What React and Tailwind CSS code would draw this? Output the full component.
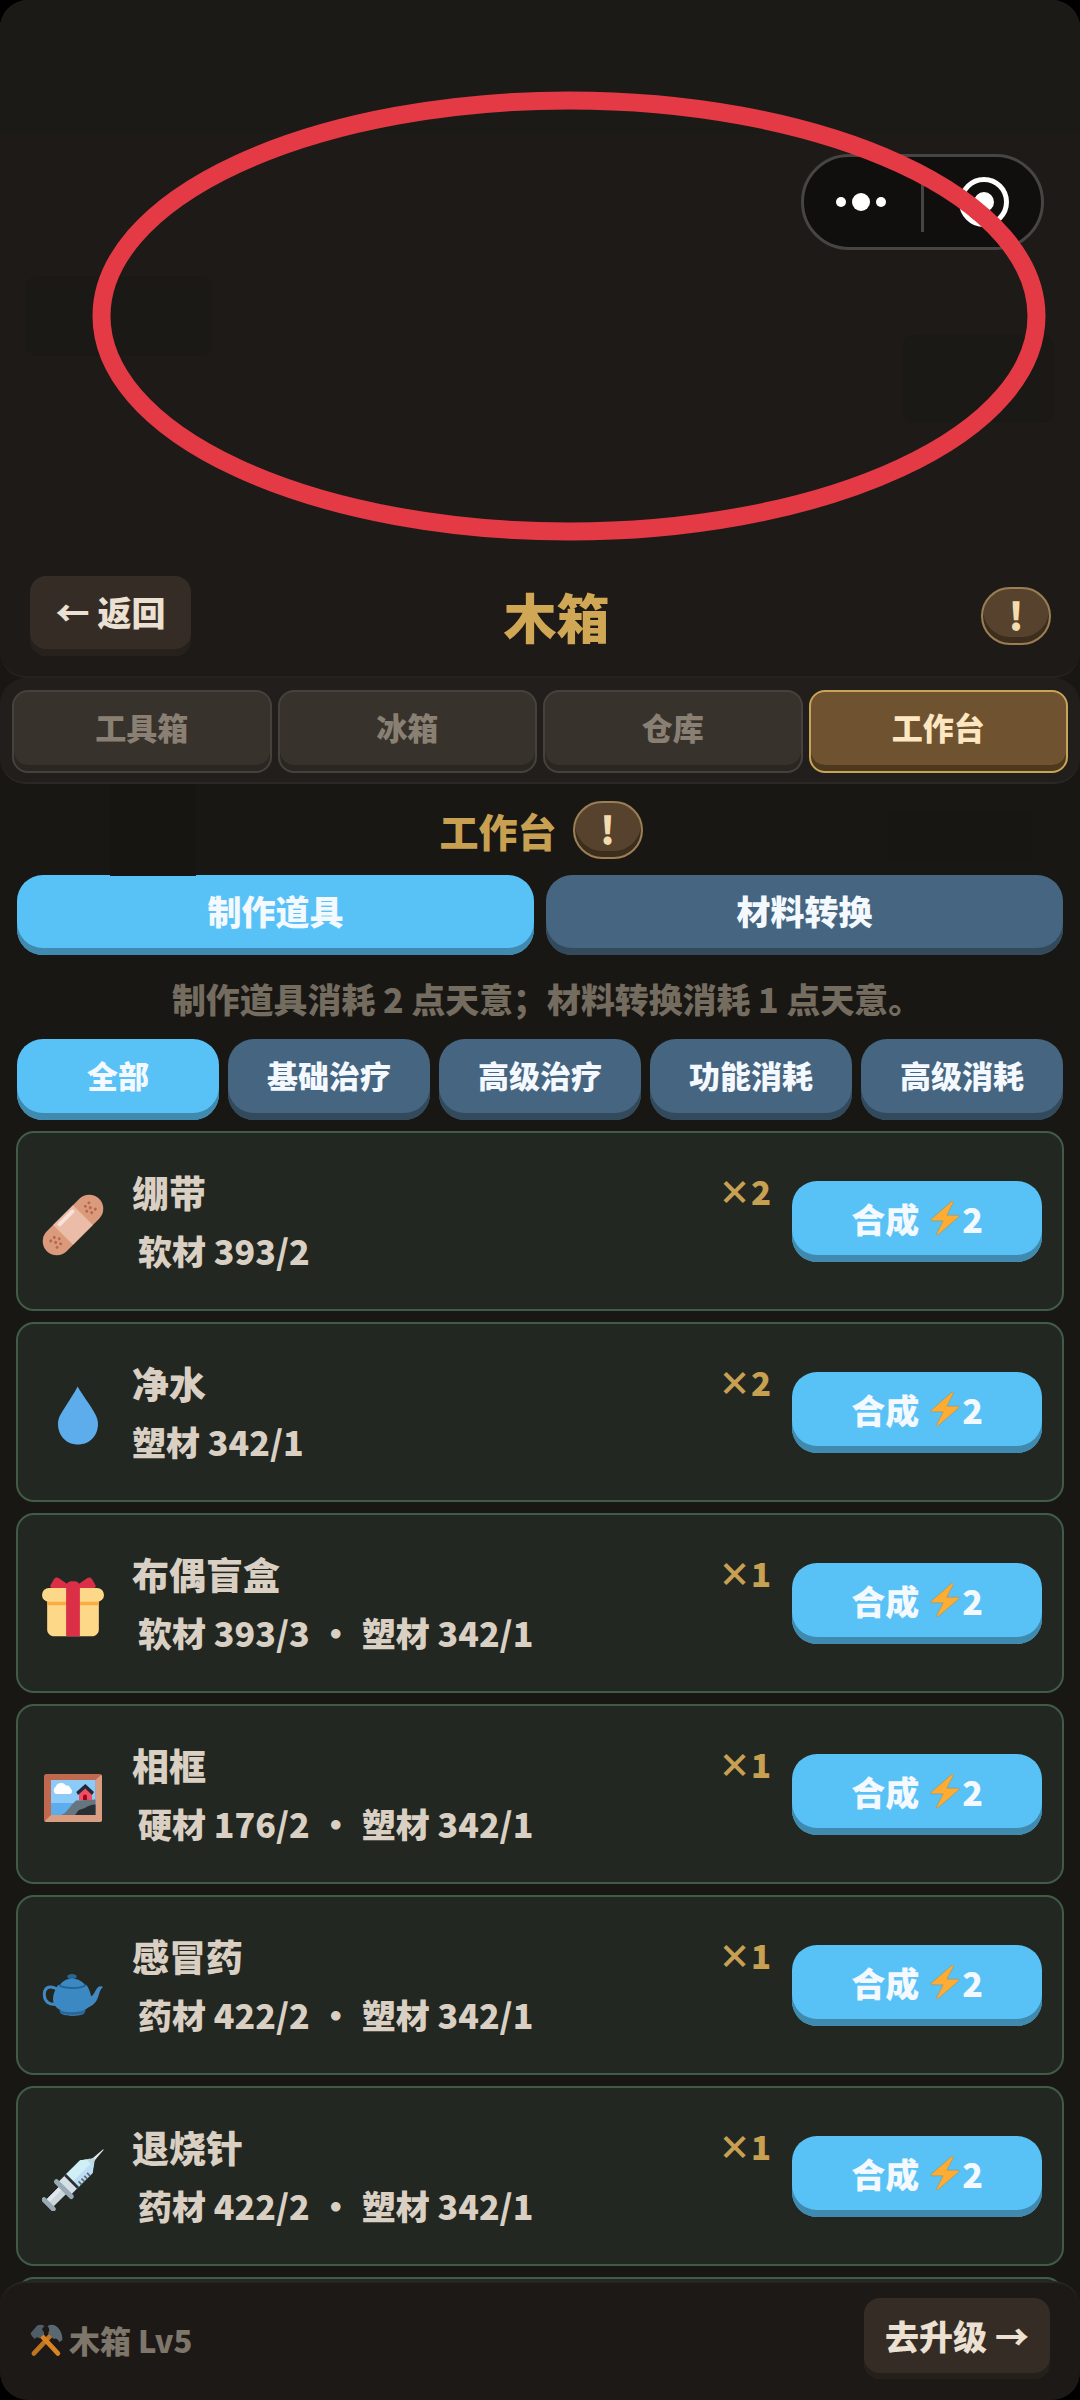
import React from "react";

const storageTabs = ["工具箱", "冰箱", "仓库", "工作台"];
const categories = ["全部", "基础治疗", "高级治疗", "功能消耗", "高级消耗"];

const recipes = [
  { name: "绷带", icon: BandageIcon, cost: "软材 393/2", count: 2, indent: true },
  { name: "净水", icon: DropIcon, cost: "塑材 342/1", count: 2, indent: false },
  { name: "布偶盲盒", icon: GiftIcon, cost: "软材 393/3 • 塑材 342/1", count: 1, indent: true },
  { name: "相框", icon: FrameIcon, cost: "硬材 176/2 • 塑材 342/1", count: 1, indent: true },
  { name: "感冒药", icon: TeapotIcon, cost: "药材 422/2 • 塑材 342/1", count: 1, indent: true },
  { name: "退烧针", icon: SyringeIcon, cost: "药材 422/2 • 塑材 342/1", count: 1, indent: true },
];

function BandageIcon() {
  const dots = [[0, -4.5], [5, -4.5], [2.5, 0], [-2.5, 0], [0, 4.5], [5, 4.5]];
  return (
    <svg viewBox="0 0 62 62" className="size-[62px]">
      <g transform="translate(31 31) rotate(-45)">
        <rect x="-37" y="-14" width="74" height="28" rx="14" fill="#DC9A7C" />
        <rect x="-14" y="-14" width="28" height="28" fill="#EBBCA8" />
        <rect x="-11" y="-12" width="22" height="4" rx="2" fill="#F8E3DA" />
        {dots.map(([x, y], i) => (
          <g key={i} fill="#B56A4E">
            <circle cx={x + 22} cy={y} r="1.5" />
            <circle cx={-x - 22} cy={y} r="1.5" />
          </g>
        ))}
      </g>
    </svg>
  );
}

function DropIcon() {
  return (
    <svg viewBox="0 0 62 62" className="size-[62px]">
      <path
        fill="#5DADEC"
        d="M35.6 1.500 C33 7 23 22 18.600 29.500 C16.500 33 16 36 16 39 C16 51 24.500 59.500 36 59.500 C47.500 59.500 56 51 56 39 C56 36 55.200 33 53.400 29.500 C49 21 38.500 7 35.600 1.500Z"
      />
    </svg>
  );
}

function GiftIcon() {
  return (
    <svg viewBox="0 0 36 36" className="size-[62px]">
      <path fill="#FDD888" d="M33 31c0 2.200-1.800 4-4 4H7c-2.200 0-4-1.800-4-4V14h30v17z" />
      <rect x="0" y="7" width="36" height="8" rx="4" fill="#FDD888" />
      <path fill="#FCAB40" d="M3 15h30v2H3z" />
      <path fill="#DA2F47" d="M19 3h-2c-1.657 0-3 1.343-3 3v29h8V6c0-1.657-1.343-3-3-3z" />
      <path
        fill="#DA2F47"
        d="M16 7c1.100 0 1.263-.516.361-1.147L9.639 1.147c-.902-.631-2.085-.366-2.631.589L4.992 5.264C4.446 6.219 4.900 7 6 7h10zm4 0c-1.100 0-1.263-.516-.361-1.147l6.723-4.706c.901-.631 2.085-.366 2.631.589l2.016 3.527C31.554 6.219 31.100 7 30 7H20z"
      />
    </svg>
  );
}

function FrameIcon() {
  return (
    <svg viewBox="0 0 62 62" className="size-[62px]">
      <rect x="2" y="7" width="58" height="48" rx="2.500" fill="#C1694F" />
      <path fill="#D99E82" d="M60 9 V52.500 Q60 55 57.500 55 H4 L2.600 54.300 L9 48 H53.500 V13 L59.300 7.700Z" />
      <rect x="9" y="13" width="44.500" height="35" fill="#8CCAF7" />
      <path fill="#5DADEC" d="M9 36 H40 V48 H9Z" />
      <path fill="#66757F" d="M19 48 C24 47 27 40 34 33.500 L53.500 32.500 V48Z" />
      <path fill="#292F33" d="M33 48 C36 45 35 43 40 42 C45 41 45 38 53.500 37.500 V48Z" />
      <path fill="#FFF" d="M14 27 a4 4 0 0 1 -.5 -7 a6 6 0 0 1 10.500 -1.500 a4 4 0 0 1 4.500 3 a3 3 0 0 1 -.5 5.500Z" />
      <path fill="#EE4F63" d="M37 26 L43.300 20 L50 26 V33 H37Z" />
      <path fill="#A0041E" d="M41 33 V29.500 a2 2 0 0 1 4 0 V33Z" />
      <path fill="#1E2A3C" d="M43.300 17 L52 25 L50 28 L43.300 21.500 L36 28 L34.300 25Z" />
    </svg>
  );
}

function TeapotIcon() {
  return (
    <svg viewBox="0 0 62 62" className="size-[62px]">
      <path d="M15 31 C6 26 2 31 2.300 37 C2.600 43.500 7.500 47.500 14.500 46" fill="none" stroke="#4289C1" strokeWidth="3" />
      <path fill="#4289C1" d="M47 38 C51.500 40 53 32 55.500 29.800 C57.500 28 60 28 61 29.200 C57 31.500 57.500 38 54 43.500 C51 47.500 48 48.500 44 51Z" />
      <ellipse cx="30" cy="18.500" rx="4.600" ry="2.500" fill="#2A6797" />
      <path fill="#3B88C3" d="M17 29 C19 24 24 20.500 30 20.500 C36 20.500 42 24 44 29Z" />
      <path fill="#3B88C3" d="M16 27 C13 32 11 36 11 41 C11 46 14 50 18.500 52 L18.500 55 C21 58 40 58 42.500 55 L42.500 52 C46 50 49.500 46 49.500 41 C49 36 47.500 31 44.500 27Z" />
      <path d="M16.800 27 C22 31 38 31 44 27" fill="none" stroke="#226699" strokeWidth="2" />
      <path fill="#2A6797" d="M17 52 C24 55 37 55 44 51.500 L42 55.500 C37 57.500 23 57.500 18.500 55Z" />
      <path fill="#4289C1" d="M20 56 C27 57.300 35 57.300 41.500 56 C38 58.300 23 58.300 20 56Z" />
    </svg>
  );
}

function SyringeIcon() {
  return (
    <svg viewBox="0 0 62 62" className="size-[62px]">
      <g transform="translate(7 55) rotate(-45)">
        <path fill="#E1E8ED" d="M62 -1.600 L77 -.4 V.4 L62 1.600Z" />
        <path fill="#BFD9E2" d="M56 -6 C60 -5 61 -2 64 -1.500 V1.500 C61 2 60 5 56 6Z" />
        <rect x="1" y="-5" width="20" height="10" fill="#CCD6DD" />
        <rect x="1" y="-5" width="20" height="4" fill="#E1E8ED" />
        <rect x="21" y="-9" width="14" height="18" fill="#D4DFE7" />
        <path fill="#BDDDF4" d="M33 -9 H53 L58 -5 V5 L53 9 H33Z" />
        <path fill="#D0F0F5" d="M33 -9 H53 L58 -5 V1 H33Z" />
        <rect x="30.500" y="-9" width="2.800" height="18" fill="#292F33" />
        {[36, 40, 44, 48].map((x) => (
          <rect key={x} x={x} y="5" width="1.800" height="4" fill="#5B6E78" />
        ))}
        <rect x="18.500" y="-13" width="5" height="26" rx="2.500" fill="#99AAB5" />
        <rect x="-3" y="-9" width="5" height="18" rx="2.500" fill="#99AAB5" />
      </g>
    </svg>
  );
}

function HammerIcon() {
  return (
    <svg viewBox="0 0 32 32" className="size-[33px]">
      <path d="M3.800 28.500 L21 10" stroke="#BF7420" strokeWidth="4.600" strokeLinecap="round" />
      <path d="M27 28.500 L10 10" stroke="#D88422" strokeWidth="4.600" strokeLinecap="round" />
      <path fill="#4E5D67" d="M.5 9 L7 1.500 Q11 -.2 14 2 L11.500 5 Q14.500 8 13.500 10 L9 14 Q7 11.500 4.500 14.500 Q1.500 12.500 .5 9Z" />
      <path fill="#5A6872" d="M17 2 Q22 -1 26.500 3 Q31.500 8 31.500 15.500 L28.500 17.500 Q26 13 23 14.500 L17.500 9 Q20 5 17 2Z" />
    </svg>
  );
}

function BoltIcon() {
  return (
    <svg viewBox="0 0 36 36" className="ml-[9px] size-[34px]">
      <path
        fill="#FFAC33"
        stroke="#8F8A63"
        strokeWidth=".5"
        d="M32.938 15.651C32.792 15.260 32.418 15 32 15H19.925L26.890 1.458c.219-.426.106-.947-.271-1.243C26.437.071 26.218 0 26 0c-.233 0-.466.082-.653.243L3.347 19.243c-.316.273-.430.714-.284 1.105S3.582 21 4 21h12.075L9.110 34.542c-.219.426-.106.947.271 1.243.182.144.401.215.619.215.233 0 .466-.082.653-.243l22-19c.317-.273.430-.714.285-1.106z"
      />
    </svg>
  );
}

function InfoButton() {
  return (
    <button className="flex h-[58px] w-[70px] items-center justify-center rounded-full border-2 border-[#9a7e54] bg-[#57432d] pb-[3px] text-[38px] leading-none font-black text-[#f4dcae] shadow-[inset_0_-6px_0_#3c2d1c]">
      !
    </button>
  );
}

function RecipeCard({ recipe }) {
  const Icon = recipe.icon;
  return (
    <div className="flex h-[180px] shrink-0 items-center rounded-[18px] border-2 border-[#405c46] bg-[#232722] pr-5 pl-6">
      <div className="mt-[7px] w-[90px]">
        <Icon />
      </div>
      <div className="flex h-full flex-1 flex-col pt-[31px] text-[#d9d0c3]">
        <div className="flex items-start justify-between">
          <span className="text-[37px] leading-[56px]">{recipe.name}</span>
          <span className="text-[33px] leading-[55px] text-[#c8a052]">×{recipe.count}</span>
        </div>
        <div className={`text-[34px] leading-[61px] whitespace-pre ${recipe.indent ? "pl-[6px]" : ""}`}>
          {recipe.cost.split(" • ").map((part, i) => (
            <span key={part}>
              {i > 0 && <span className="mx-[9px] inline-block w-[34px] text-center">•</span>}
              {part}
            </span>
          ))}
        </div>
      </div>
      <button className="ml-[21px] flex h-[81px] w-[250px] items-center justify-center rounded-[25px] bg-[#58c2f6] pb-[6px] text-[34px] text-[#f3f9ff] shadow-[inset_0_-7px_0_#3f8aae]">
        合成
        <BoltIcon />
        2
      </button>
    </div>
  );
}

export default function App() {
  return (
    <div className="h-[2400px] w-[1080px] overflow-hidden bg-black font-['Noto_Sans_CJK_SC',sans-serif] font-black">
      <div className="flex h-full flex-col overflow-hidden rounded-[28px] bg-[#191714]">
        {/* header */}
        <header className="relative h-[678px] shrink-0 rounded-b-[26px] border-b-2 border-[#262220] bg-[#1d1a17]">
          {/* dimmed page behind the overlay */}
          <div className="h-[134px] bg-[#1b1a16]" />
          <div className="absolute top-[276px] left-[26px] h-20 w-[186px] rounded-xl bg-[#1b1916]" />
          <div className="absolute top-[335px] right-[26px] h-[88px] w-[152px] rounded-xl bg-[#1b1916]" />

          <div className="mt-[442px] grid h-20 grid-cols-[1fr_auto_1fr] items-center px-[30px]">
            <button className="h-20 w-[161px] rounded-2xl bg-[#352c26] pb-[9px] text-[34px] text-[#ebe0d1] shadow-[inset_0_-7px_0_#26211c]">
              ← 返回
            </button>
            <h1 className="pl-[33px] text-[53px] leading-[80px] text-[#d0a755]">木箱</h1>
            <div className="-mr-px justify-self-end">
              <InfoButton />
            </div>
          </div>

          <div className="absolute top-[154px] right-[36px] flex h-[96px] w-[243px] items-center rounded-full border-[3px] border-[#474543] bg-[#100f0e]">
            <div className="flex flex-1 items-center justify-center gap-[6px] pr-[3px]">
              <span className="size-[10px] rounded-full bg-white" />
              <span className="size-[18px] rounded-full bg-white" />
              <span className="size-[10px] rounded-full bg-white" />
            </div>
            <span className="h-[60px] w-[3px] bg-[#474543]" />
            <div className="flex flex-1 items-center justify-center pl-[3px]">
              <span className="flex size-[50px] items-center justify-center rounded-full border-[5px] border-white">
                <span className="size-5 rounded-full bg-white" />
              </span>
            </div>
          </div>
          <svg viewBox="0 0 960 456" className="absolute top-[88px] left-[89px] h-[456px] w-[960px]">
            <ellipse cx="480" cy="228" rx="467.500" ry="215.500" fill="none" stroke="#e33a45" strokeWidth="18" />
          </svg>
        </header>

        {/* storage tabs */}
        <nav className="flex h-[106px] shrink-0 gap-[6px] rounded-[26px] border-b-2 border-[#2b2724] bg-[#221e1b] px-3 pt-3 pb-[9px]">
          {storageTabs.map((tab) => (
            <button
              key={tab}
              className={`flex-1 rounded-2xl border-2 pb-[9px] text-[31px] ${
                tab === "工作台"
                  ? "border-[#c8a458] bg-[#6f522f] text-[#fde7c3] shadow-[inset_0_-6px_0_#4f391d]"
                  : "border-[#46413c] bg-[#38322d] text-[#898073] shadow-[inset_0_-6px_0_#2a2622]"
              }`}
            >
              {tab}
            </button>
          ))}
        </nav>

        <main className="relative flex min-h-0 flex-1 flex-col overflow-hidden px-4">
          <div className="absolute top-0 left-[110px] h-[92px] w-[86px] bg-[#161512]" />
          <div className="absolute top-[26px] right-[47px] h-[50px] w-[144px] rounded bg-[#171612]" />

          <div className="relative mt-[17px] flex h-[58px] shrink-0 items-center justify-center gap-4 pl-[2px]">
            <h2 className="text-[39px] leading-[56px] text-[#c8a052]">工作台</h2>
            <InfoButton />
          </div>

          <div className="mt-4 flex h-20 shrink-0 gap-3 px-px text-[34px] text-[#f3f9ff]">
            <button className="flex-1 rounded-[26px] bg-[#58c2f6] pb-[9px] shadow-[inset_0_-7px_0_#3f8aae]">制作道具</button>
            <button className="flex-1 rounded-[26px] bg-[#466580] pb-[9px] shadow-[inset_0_-7px_0_#324a5c]">材料转换</button>
          </div>

          <p className="mt-[13px] h-[71px] shrink-0 pl-[14px] text-center text-[33.9px] leading-[61px] text-[#756c60]">
            制作道具消耗 2 点天意；材料转换消耗 1 点天意。
          </p>

          <div className="flex h-[81px] shrink-0 gap-[9px] px-px text-[31px] text-[#f3f9ff]">
            {categories.map((label, i) => (
              <button
                key={label}
                className={`flex-1 rounded-[26px] pb-[9px] ${
                  i === 0 ? "bg-[#58c2f6] shadow-[inset_0_-7px_0_#3f8aae]" : "bg-[#466580] shadow-[inset_0_-7px_0_#324a5c]"
                }`}
              >
                {label}
              </button>
            ))}
          </div>

          <div className="mt-[11px] flex flex-col gap-[11px]">
            {recipes.map((recipe) => (
              <RecipeCard key={recipe.name} recipe={recipe} />
            ))}
            <div className="h-[180px] shrink-0 rounded-[18px] border-2 border-[#405c46] bg-[#232722]" />
          </div>
        </main>

        <footer className="relative -mt-[26px] flex h-[119px] shrink-0 items-center justify-between rounded-[26px] border-t-2 border-[#262724] bg-[#1d1916] px-[30px]">
          <div className="flex items-center gap-[6px] pb-[3px] text-[31px] text-[#7e766b]">
            <HammerIcon />
            <span>木箱 Lv5</span>
          </div>
          <button className="mb-[7px] h-[81px] w-[186px] rounded-2xl bg-[#352c26] pb-[6px] text-[34px] text-[#ebe0d1] shadow-[inset_0_-6px_0_#26201b]">
            去升级 →
          </button>
        </footer>
      </div>
    </div>
  );
}
